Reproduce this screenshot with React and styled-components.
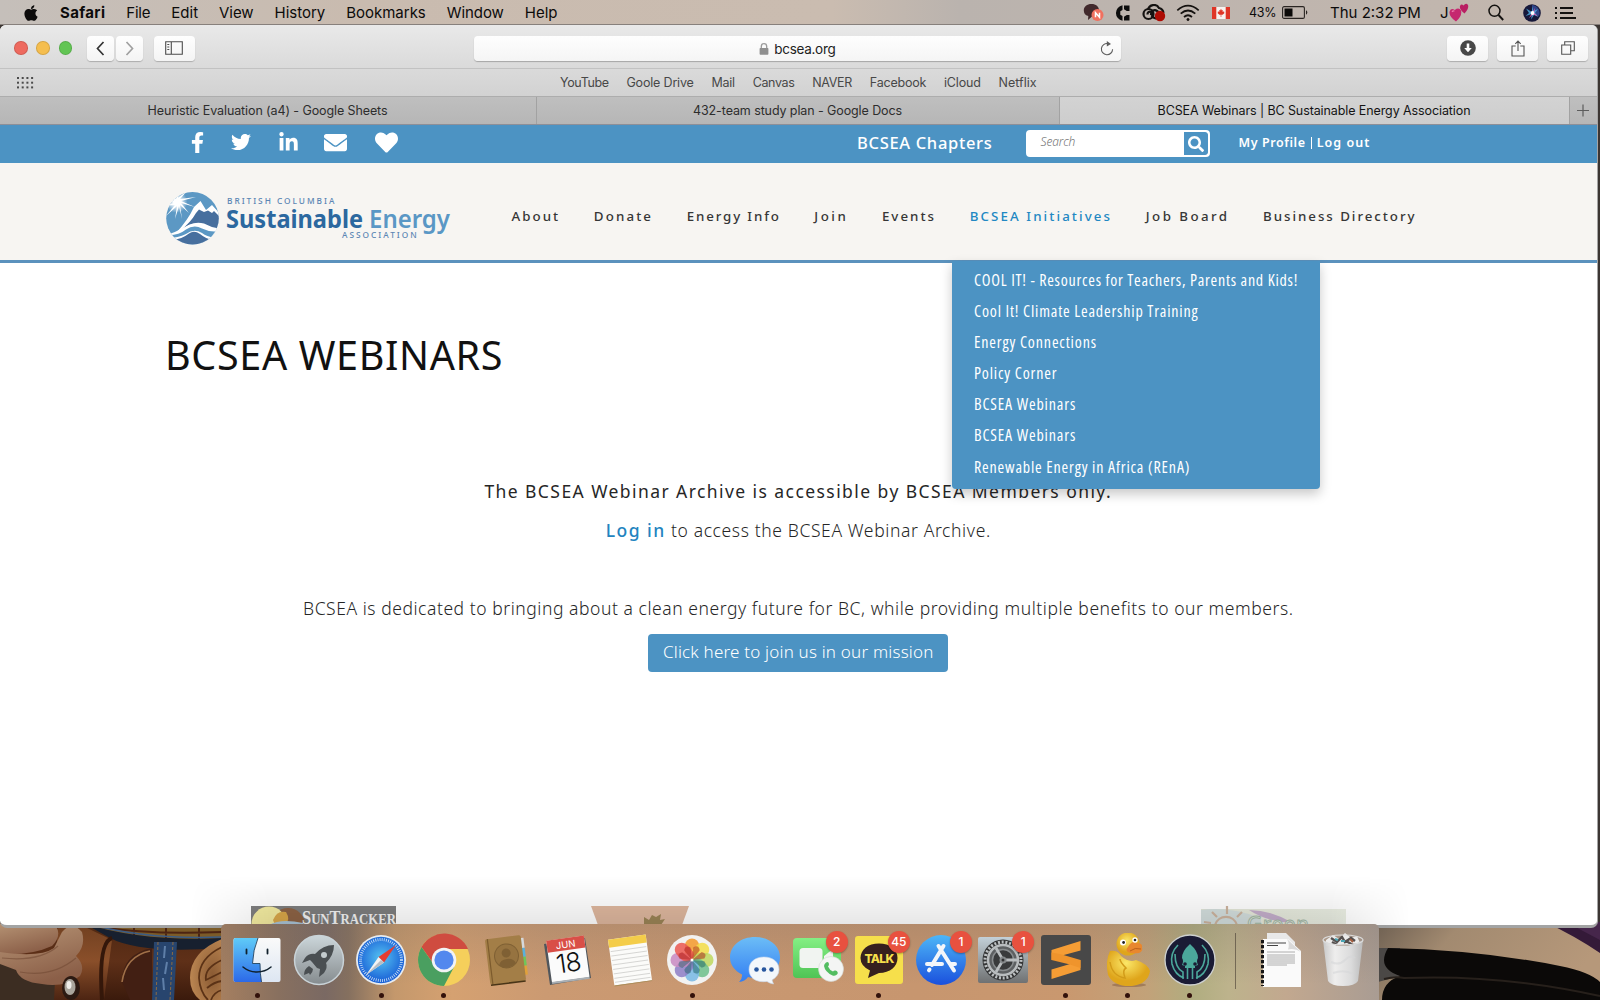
import React from "react";
import styled, { createGlobalStyle } from "styled-components";
import { FaApple, FaFacebookF, FaTwitter, FaLinkedinIn, FaEnvelope, FaHeart, FaSearch } from "react-icons/fa";

const ui = `Inter, "Liberation Sans", sans-serif`;
const web = `"Noto Sans", "Open Sans", sans-serif`;
const narrow = `"Open Sans", "Noto Sans", sans-serif`;
const blue = "#4c93c3";

const Global = createGlobalStyle`
  * { box-sizing: border-box; }
  body { margin: 0; background: #2b1d14; }
  svg { display: block; flex: none; }
`;

/* ---------- desktop ---------- */
const Desktop = styled.div`
  position: relative;
  width: 1600px;
  height: 1000px;
  overflow: hidden;
  display: flex;
  flex-direction: column;
  background: #3c3633;
  font-family: ${ui};
`;
const Wallpaper = styled.svg`
  position: absolute;
  left: 0;
  bottom: 0;
`;

const MenuBar = styled.div`
  position: relative;
  flex: none;
  display: flex;
  align-items: center;
  height: 25px;
  padding: 1px 24px 0 22px;
  background: linear-gradient(90deg, #c5bfba 0, #c9bbaf 22%, #cabcb0 52%, #bab3ae 60%, #bfb5ae 80%, #c3b7ae 100%);
  border-bottom: 1px solid #87807c;
  color: #0c0b0b;
`;
const MenuItem = styled.span`
  font-size: 15px;
  line-height: 24px;
  font-weight: ${(p) => (p.$bold ? 700 : 400)};
  letter-spacing: ${(p) => p.$ls}px;
  margin-left: ${(p) => p.$ml || 20.9}px;
  white-space: nowrap;
`;
const Spacer = styled.div`
  flex: 1;
`;
const Status = styled.div`
  display: flex;
  align-items: center;
  margin-left: ${(p) => p.$ml || 0}px;
  width: ${(p) => p.$w}px;
  font-size: ${(p) => p.$size || 15}px;
  letter-spacing: ${(p) => p.$ls || 0}px;
  white-space: nowrap;
`;

/* ---------- Safari window ---------- */
const Window = styled.div`
  position: relative;
  flex: none;
  width: 1598px;
  height: 903px;
  display: flex;
  flex-direction: column;
  overflow: hidden;
  border-radius: 6px 6px 7px 7px;
  border-right: 1px solid #a5a5a5;
  border-bottom: 3px solid #a3a4a4;
  background: #fff;
`;
const Toolbar = styled.div`
  flex: none;
  display: flex;
  align-items: center;
  height: 44px;
  padding: 3px 9px 0 14px;
  background: linear-gradient(#e9e9e9, #dadada);
  border-bottom: 1px solid #c2c2c2;
`;
const Light = styled.i`
  width: 13.5px;
  height: 13.5px;
  margin-right: 8.8px;
  border-radius: 50%;
  background: ${(p) => p.$c};
  border: 0.5px solid rgba(0, 0, 0, 0.12);
`;
const ToolButton = styled.div`
  display: flex;
  align-items: center;
  justify-content: center;
  width: ${(p) => p.$w}px;
  height: 25px;
  margin-left: ${(p) => p.$ml}px;
  border-radius: 4px;
  background: linear-gradient(#fefefe, #f4f4f4);
  box-shadow: 0 1px 1px rgba(0, 0, 0, 0.22);
`;
const Address = styled.div`
  display: grid;
  grid-template-columns: 1fr auto 1fr;
  align-items: center;
  width: 647px;
  height: 25px;
  margin-left: 279.5px;
  margin-right: auto;
  padding-right: 7px;
  border-radius: 4px;
  background: linear-gradient(#fefefe, #f5f5f5);
  box-shadow: 0 1px 1px rgba(0, 0, 0, 0.25);
`;
const Url = styled.div`
  grid-column: 2;
  display: flex;
  align-items: center;
  gap: 5px;
  padding: 1px 0 0 6px;
  font-size: 13.5px;
  letter-spacing: -0.3px;
  color: #222;
`;
const Reload = styled.div`
  justify-self: end;
`;
const Bookmarks = styled.div`
  flex: none;
  position: relative;
  display: flex;
  align-items: center;
  height: 27px;
  padding-left: 17px;
  background: linear-gradient(#dadada, #d2d2d2);
`;
const BookmarkRow = styled.div`
  display: flex;
  gap: 17.8px;
  margin-left: 526px;
`;
const Bookmark = styled.span`
  font-size: 12.5px;
  letter-spacing: ${(p) => p.$ls}px;
  color: #484848;
  white-space: nowrap;
`;
const TabBar = styled.div`
  flex: none;
  display: flex;
  height: 29px;
  border-top: 1px solid #adadad;
  border-bottom: 1px solid #8d8f98;
  background: linear-gradient(#bfbfbf, #b6b6b6);
`;
const Tab = styled.div`
  display: flex;
  align-items: center;
  justify-content: center;
  width: ${(p) => p.$w}px;
  padding: 0 1px 1px 0;
  border-right: 1px solid #a2a2a2;
  background: ${(p) => (p.$active ? "linear-gradient(#d3d3d3, #cdcdcd)" : "none")};
  color: ${(p) => (p.$active ? "#141414" : "#2d2d2d")};
  font-size: 12.5px;
  letter-spacing: -0.1px;
`;

/* ---------- site ---------- */
const TopBar = styled.div`
  flex: none;
  display: flex;
  align-items: center;
  height: 38px;
  padding: 0 0 2px 190.5px;
  background: ${blue};
  color: #fff;
  font-family: ${web};
`;
const Social = styled.div`
  display: flex;
  align-items: center;
  justify-content: center;
  width: ${(p) => p.$w}px;
  margin-right: ${(p) => p.$mr}px;
  padding-bottom: 2px;
`;
const Chapters = styled.span`
  font-size: 16.5px;
  font-weight: 500;
  letter-spacing: 0.68px;
  margin-left: 458.5px;
  padding-bottom: 1px;
  width: 168.5px;
`;
const SearchBox = styled.div`
  display: flex;
  width: 184px;
  height: 27px;
  margin-top: 1px;
  border: 2px solid #fff;
  border-radius: 4px;
  background: #fff;
  overflow: hidden;
`;
const Placeholder = styled.span`
  flex: 1;
  padding-left: 13px;
  font: italic 300 12px/20px ${web};
  letter-spacing: -0.1px;
  color: #777;
`;
const SearchButton = styled.div`
  display: flex;
  align-items: center;
  justify-content: center;
  width: 24px;
  border-radius: 0 3px 3px 0;
  background: ${blue};
`;
const Account = styled.div`
  display: flex;
  align-items: center;
  margin-left: 29px;
  padding-bottom: 1px;
  font-size: 12.5px;
  font-weight: 600;
`;
const AccountLink = styled.span`
  letter-spacing: ${(p) => p.$ls}px;
`;
const AccountRule = styled.i`
  width: 1px;
  height: 12px;
  margin: 0 5px 0 5px;
  background: #fff;
`;
const Header = styled.header`
  flex: none;
  position: relative;
  display: flex;
  align-items: center;
  height: 100px;
  padding-left: 160px;
  background: #f7f5f2;
  border-bottom: 3px solid #5b92bd;
  z-index: 2;
`;
const LogoSlot = styled.div`
  width: 351.5px;
  padding-top: 12px;
`;
const Nav = styled.nav`
  display: flex;
  gap: 33.6px;
  padding-top: 9px;
`;
const NavItem = styled.span`
  font: 500 13.3px/18px ${web};
  letter-spacing: ${(p) => p.$ls}px;
  color: ${(p) => (p.$active ? "#2288c3" : "#363636")};
  white-space: nowrap;
`;
const Dropdown = styled.div`
  position: absolute;
  left: 952px;
  top: 98px;
  width: 368px;
  height: 228px;
  padding: 4px 0 0 22px;
  border-radius: 0 0 4px 4px;
  background: ${blue};
  box-shadow: 0 5px 12px rgba(0, 0, 0, 0.22);
`;
const DropItem = styled.div`
  height: 31.1px;
  font: 500 16px/31px ${narrow};
  font-stretch: 75%;
  letter-spacing: ${(p) => p.$ls}px;
  color: #fff;
  white-space: nowrap;
`;
const Content = styled.main`
  flex: 1;
  min-height: 0;
  display: flex;
  flex-direction: column;
  align-items: center;
  padding-right: 0.5px;
  font-family: ${web};
`;
const Title = styled.h1`
  align-self: stretch;
  height: 186px;
  margin: 0;
  padding-left: 165px;
  font-size: 39.5px;
  line-height: 185px;
  font-weight: 400;
  letter-spacing: 0.65px;
  color: #111;
`;
const Line = styled.p`
  margin: ${(p) => p.$mt || 0}px 0 0;
  height: 39px;
  font-size: 17.5px;
  line-height: 39px;
  font-weight: ${(p) => (p.$strong ? 400 : 300)};
  letter-spacing: ${(p) => p.$ls}px;
  color: #262626;
  white-space: nowrap;
`;
const LogIn = styled.a`
  font-weight: 500;
  letter-spacing: 1.5px;
  color: #2384bf;
`;
const JoinButton = styled.div`
  display: flex;
  align-items: center;
  justify-content: center;
  width: 300px;
  height: 38px;
  margin-top: 6px;
  padding-bottom: 3px;
  border-radius: 4px;
  background: ${blue};
  color: #fff;
  font-size: 17px;
  font-weight: 300;
  letter-spacing: 0.2px;
`;
const Sponsors = styled.div`
  align-self: stretch;
  flex: none;
  display: flex;
  height: 19px;
  margin-top: auto;
  padding-left: 251px;
  overflow: hidden;
`;
const SponsorSlot = styled.div`
  width: ${(p) => p.$w}px;
  margin-right: ${(p) => p.$mr || 0}px;
`;

/* ---------- dock ---------- */
const DockHaze = styled.div`
  position: absolute;
  left: 190px;
  right: 190px;
  bottom: 72px;
  height: 52px;
  background: linear-gradient(rgba(0, 0, 0, 0), rgba(0, 0, 0, 0.1));
  mask-image: linear-gradient(90deg, transparent, #000 80px, #000 calc(100% - 80px), transparent);
`;
const Dock = styled.div`
  position: absolute;
  left: 221px;
  bottom: 0;
  width: 1158px;
  height: 76px;
  display: flex;
  padding: 9px 0 0 5px;
  border-radius: 5px 5px 0 0;
  background: linear-gradient(rgba(110, 100, 95, 0.22), rgba(110, 100, 95, 0) 80%),
    linear-gradient(90deg, #a57f60 0, #88705f 5%, #7a6963 9%, #85705f 11%, #c4986c 15%, #d5a171 20%, #cb9a72 28%, #c99871 40%, #c7966f 60%, #c9986f 73%, #c2a279 80%, #b0ad80 84%, #bdb38c 87%, #c2a88f 92%, #a99c93 100%);
`;
const DockItem = styled.div`
  position: relative;
  display: flex;
  flex-direction: column;
  align-items: center;
  width: 62.2px;
`;
const Dot = styled.i`
  width: 5px;
  height: 5px;
  margin-top: 5.5px;
  border-radius: 50%;
  background: #32110b;
`;
const Badge = styled.span`
  position: absolute;
  left: 40px;
  top: -2px;
  width: 22px;
  height: 22px;
  border-radius: 50%;
  background: #e8513f;
  box-shadow: 0 1px 2px rgba(0, 0, 0, 0.3);
  color: #fff;
  font: 500 12px/22px ${ui};
  text-align: center;
`;
const DockRule = styled.div`
  width: 29px;
  height: 56px;
  display: flex;
  justify-content: center;
  &::before {
    content: "";
    width: 1px;
    background: rgba(70, 60, 50, 0.6);
  }
`;

/* ---------- drawings ---------- */
const Backdrop = () => (
  <Wallpaper width="1600" height="78" viewBox="0 0 1600 78">
    <defs>
      <linearGradient id="skin" x1="0" y1="0" x2="0.4" y2="1">
        <stop offset="0" stopColor="#b79576" /><stop offset="1" stopColor="#8b5f48" />
      </linearGradient>
      <linearGradient id="leather" x1="0" y1="0" x2="0" y2="1">
        <stop offset="0" stopColor="#4e2812" /><stop offset="0.5" stopColor="#5f3018" /><stop offset="1" stopColor="#3a1a0c" />
      </linearGradient>
      <linearGradient id="flap" x1="0" y1="0" x2="0" y2="1">
        <stop offset="0" stopColor="#6f3f20" /><stop offset="0.5" stopColor="#8a4f2a" /><stop offset="1" stopColor="#4c2412" />
      </linearGradient>
      <radialGradient id="coin" cx="0.7" cy="0.6" r="0.7">
        <stop offset="0" stopColor="#8a5a33" /><stop offset="1" stopColor="#bb8652" />
      </radialGradient>
      <linearGradient id="sand" x1="0" y1="0" x2="1" y2="0.3">
        <stop offset="0" stopColor="#6e6052" /><stop offset="0.35" stopColor="#a28a70" /><stop offset="1" stopColor="#b6987a" />
      </linearGradient>
    </defs>
    <rect width="230" height="78" fill="url(#leather)" />
    <path d="M85 0H222V18Q150 24 85 2Z" fill="#7c5b27" />
    <path d="M100 5Q150 13 222 10M134 0V14M166 0V17M199 0V17" stroke="#4c2412" strokeWidth="2" fill="none" />
    <path d="M85 2Q145 20 222 16V26Q140 32 110 16Z" fill="#17202f" />
    <path d="M85 1Q145 18 222 15" stroke="#3a5c86" strokeWidth="1.5" fill="none" />
    <path d="M0 30L60 48V78H0Z" fill="#3c2d22" />
    <path d="M58 0L85 5L112 18L104 78H54Z" fill="url(#flap)" />
    <path d="M112 16Q98 20 102 78" stroke="#34170a" strokeWidth="4" fill="none" />
    <path d="M122 60Q122 32 152 26V78H130Z" fill="#421f13" />
    <path d="M122 60Q126 34 150 29" stroke="#a07048" strokeWidth="1.6" fill="none" />
    <path d="M154 20H177L174 78H152Z" fill="#28456e" />
    <path d="M158 20L156 78M173 20L170 78" stroke="#8d6b43" strokeWidth="1" strokeDasharray="3 2" />
    <path d="M165 24l-1 12M167 40l-2 12M163 56l1 12" stroke="#5f7fa8" strokeWidth="2" />
    <path d="M222 17Q190 30 190 56Q190 70 200 78H222Z" fill="url(#coin)" />
    <path d="M222 25Q199 36 199 56Q200 70 208 78M222 38Q204 46 206 58L222 50M207 66Q214 60 222 59M211 78Q214 70 222 68" stroke="#5b3216" strokeWidth="1.8" fill="none" />
    <path d="M0 2Q36-4 56 4Q62 14 52 24Q30 34 0 32Z" fill="url(#skin)" />
    <path d="M62 10Q72 -2 82 10Q86 24 76 34Q86 44 80 54Q64 66 42 62Q20 60 16 48L0 42V30Q40 36 54 26Z" fill="url(#skin)" />
    <path d="M2 36Q40 40 58 24M20 50Q52 56 76 36" stroke="#724933" strokeWidth="1.2" fill="none" opacity="0.6" />
    <ellipse cx="71" cy="66" rx="9" ry="12" fill="#2c1a12" />
    <ellipse cx="70" cy="65" rx="5.5" ry="8" fill="#a9a59c" />
    <ellipse cx="69" cy="63" rx="2.5" ry="4" fill="#efeeea" />
    <path d="M1378 0H1600V78H1378Z" fill="url(#sand)" />
    <path d="M1378 26H1400V54L1378 60Z" fill="#4b4846" />
    <path d="M1388 26Q1480 28 1560 44Q1590 50 1600 60V78H1382Q1382 60 1400 54Q1376 46 1388 26Z" fill="#0b0908" />
    <path d="M1384 57Q1396 54 1404 56Q1500 52 1600 74" stroke="#27201b" strokeWidth="2" fill="none" />
    <path d="M1545 0H1600V31Q1575 14 1545 0Z" fill="#341a38" />
    <path d="M1566 0H1600V18Z" fill="#46264b" />
  </Wallpaper>
);

const TalkIcon = () => (
  <svg width="21" height="19" viewBox="0 0 21 19">
    <path d="M8.5 1C13 1 16 3.6 16 7.4S13 13.6 9 13.6L5 17l.3-4C2 12 .8 10 .8 7.4.8 3.6 4 1 8.5 1Z" fill="#41292c" />
    <circle cx="14.5" cy="12" r="6" fill="#f0705f" />
    <path d="M12.5 14.3V9.7l4 4.6V9.7" stroke="#fff" strokeWidth="1.5" fill="none" />
  </svg>
);
const CIcon = () => (
  <svg width="16" height="16" viewBox="0 0 16 16">
    <path d="M8.5 .3V5L6.3 6.2V9.8L8.5 11V15.7A7.8 7.8 0 0 1 8.5 .3Z" fill="#0d0d0d" />
    <path d="M10 .5H15.5V6H12.8L10 4.3ZM10 15.5H15.5V10H12.8L10 11.7Z" fill="#0d0d0d" />
  </svg>
);
const CloudIcon = () => (
  <svg width="25" height="18" viewBox="0 0 25 18">
    <g fill="none" stroke="#141211" strokeWidth="2.2">
      <circle cx="6.5" cy="10" r="5" />
      <path d="M6 5.5A6 6 0 0 1 17 4Q21 5 21.5 9M5.5 10.5a2.6 2.6 0 1 1 4.5 1.5q3 4 6 1" />
      <path d="M9 11Q9 6 13 6.2q3 .3 3.5 3" />
    </g>
    <circle cx="18" cy="12" r="5.2" fill="#ad0c04" />
  </svg>
);
const WifiIcon = () => (
  <svg width="24" height="18" viewBox="0 0 24 18" fill="none" stroke="#14110f" strokeWidth="1.7">
    <path d="M1.3 6.3Q12-3 22.7 6.3M4.7 9.7Q12 3.3 19.3 9.7M8 13Q12 9.5 16 13" />
    <circle cx="12" cy="15.5" r="1.2" fill="#14110f" strokeWidth="0.5" />
  </svg>
);
const FlagIcon = () => (
  <svg width="18" height="12" viewBox="0 0 18 12">
    <rect width="18" height="12" fill="#f7f2ef" />
    <path d="M0 0h4.3v12H0zM13.7 0H18v12h-4.3z" fill="#df3526" />
    <path d="M9 1.8l.9 1.6 1-.4-.3 2 1.6-.8-.3 1.2.9.4-2.2 2H9.3V10h-.6V7.8H7.4l-2.2-2 .9-.4-.3-1.2 1.6.8-.3-2 1 .4Z" fill="#df3526" />
  </svg>
);
const BatteryIcon = () => (
  <svg width="26" height="13" viewBox="0 0 26 13">
    <rect x=".6" y=".6" width="21.8" height="11.8" rx="1.5" fill="none" stroke="#2a2522" strokeWidth="1.1" />
    <rect x="2.5" y="2.5" width="8" height="8" fill="#0c0a09" />
    <path d="M24 4.3q1.3.6 1.3 2.2t-1.3 2.2Z" fill="#2a2522" />
  </svg>
);
const HeartsIcon = () => (
  <svg width="20" height="20" viewBox="0 0 20 20">
    <path d="M7 18.5Q-.5 13 .6 8.5 2 4.5 5.8 7 9.8 3.8 12 7.5 13.5 12.5 7 18.5Z" fill="#c5276f" />
    <path d="M3 8.8q1-1.3 2.4-.5" stroke="#ef7cae" strokeWidth="1.2" fill="none" />
    <path d="M15.5 10.5Q10 6 11 3 12.3 .4 14.5 2.5 17-.6 19 2 20.2 5.5 15.5 10.5Z" fill="#b91f63" />
  </svg>
);
const LensIcon = () => (
  <svg width="16" height="17" viewBox="0 0 16 17" fill="none" stroke="#141210" strokeWidth="1.5">
    <circle cx="6.5" cy="6.8" r="5.5" />
    <path d="M10.5 11l4.7 5" strokeWidth="1.9" />
  </svg>
);
const SiriIcon = () => (
  <svg width="18" height="18" viewBox="0 0 18 18">
    <circle cx="9" cy="9" r="8.8" fill="#16183a" />
    <path d="M9 1A8 8 0 0 1 16 12L9 9Z" fill="#3b55a8" opacity=".7" />
    <path d="M9 8L3 4.5 6 9 2.5 12 9 10 8 15.5 11 11 15.5 13 12 9 15 5 10.5 7 9 2.5Z" fill="#4da8dc" opacity=".85" />
    <path d="M9 9L12 4 11 9 15 12 10 10.5 6 14Z" fill="#d55eb0" />
    <circle cx="9.5" cy="9" r="1.9" fill="#fff" />
  </svg>
);
const ListIcon = () => (
  <svg width="21" height="14" viewBox="0 0 21 14" stroke="#141210" strokeWidth="1.9">
    <path d="M0 2h2M0 7h2M0 12h2M5 2h13M5 7h13M5 12h16" />
  </svg>
);
const Chevron = ({ flip, c }) => (
  <svg width="9" height="15" viewBox="0 0 9 15" fill="none" stroke={c} strokeWidth="1.7">
    <path d={flip ? "M1.5 1l6 6.5-6 6.5" : "M7.5 1l-6 6.5 6 6.5"} />
  </svg>
);
const SidebarIcon = () => (
  <svg width="18" height="14" viewBox="0 0 18 14" fill="none" stroke="#4c4c4c" strokeWidth="1.1">
    <path d="M.7 .7h16.6v12.6H.7zM6.3 .7v12.6M2.3 3.5h2M2.3 6h2M2.3 8.5h2" />
  </svg>
);
const LockIcon = () => (
  <svg width="10" height="12" viewBox="0 0 10 12">
    <path d="M2.3 5.5V3.4a2.7 2.7 0 0 1 5.4 0v2.1" fill="none" stroke="#9b9b9b" strokeWidth="1.3" />
    <rect x=".6" y="5" width="8.8" height="6.8" rx=".8" fill="#8f8f8f" />
  </svg>
);
const ReloadIcon = () => (
  <svg width="14" height="15" viewBox="0 0 14 15">
    <path d="M8 2.6A5.6 5.6 0 1 0 12.6 8.2" fill="none" stroke="#5d5d5d" strokeWidth="1.1" />
    <path d="M6.8 0L11 3 6.8 5.4Z" fill="#5d5d5d" />
  </svg>
);
const DownloadIcon = () => (
  <svg width="16" height="16" viewBox="0 0 16 16">
    <circle cx="8" cy="8" r="7.8" fill="#484848" />
    <path d="M6.7 3.5h2.6V8h2.5L8 12.3 4.2 8h2.5Z" fill="#fff" />
  </svg>
);
const ShareIcon = () => (
  <svg width="14" height="17" viewBox="0 0 14 17" fill="none" stroke="#555" strokeWidth="1.1">
    <path d="M4.7 6H1v10h12V6H9.3M7 11V1M4.3 3.8L7 1l2.7 2.8" />
  </svg>
);
const TabsIcon = () => (
  <svg width="14" height="14" viewBox="0 0 14 14" fill="none" stroke="#555" strokeWidth="1.1">
    <path d="M.7 4h9v9.3h-9zM3.7 4V.7h9.6v9H9.7" />
  </svg>
);
const GridDots = () => (
  <svg width="17" height="12" viewBox="0 0 17 12" fill="#4b4b4b">
    {[0, 1, 2, 3].map((x) => [0, 1, 2].map((y) => <rect key={`${x}${y}`} x={x * 4.7} y={y * 4.7} width="2" height="2" />))}
  </svg>
);
const PlusIcon = () => (
  <svg width="27" height="27" viewBox="0 0 27 27" stroke="#5c5c5c" strokeWidth="1.2">
    <path d="M7 13.5h12M13 7.5v12" />
  </svg>
);

const SiteLogo = () => (
  <svg width="300" height="60" viewBox="160 188 300 60">
    <defs>
      <clipPath id="disc"><circle cx="192.5" cy="218.3" r="26.3" /></clipPath>
      <radialGradient id="sun"><stop offset="0.25" stopColor="#fff" /><stop offset="1" stopColor="#fff" stopOpacity="0" /></radialGradient>
    </defs>
    <g clipPath="url(#disc)">
      <rect x="166" y="191" width="54" height="54" fill="#5c98c4" />
      <circle cx="176.5" cy="202" r="11" fill="url(#sun)" />
      <path
        d="M176 201L170 190 174 201 162 195 174 203 163 206 175 205 166 216 177 206 175 219 179 206 182 219 180 205 189 213 181 203 195 207 181 201 196 197 180 199 188 190 178 198 179 190Z"
        fill="#fff"
      />
      <path d="M176 233Q188 220 194 207L200.5 201 206 210 212 205 222 216V240Z" fill="#fff" />
      <path d="M180 231Q191 222 196 213L199 209.5 204 212 208 210.5 212 213 214 211 222 219V229Q212 228 204 223.5 192 220 180 231Z" fill="#476f9e" />
      <path d="M164 236Q176 232 184 227.5 194 221 204 226 212 230 222 229V245H164Z" fill="#fff" />
      <path d="M166 235Q178 236 186 229.5 194 224 202 228.5 210 232.5 219 231L217 237Q208 238 202 233 194 228 186 234 178 238 168 238Z" fill="#5c98c4" />
      <path d="M172 240Q182 239 189 233.5 194 230 200 234 206 239 213 240L205 246H180Z" fill="#476f9e" />
    </g>
    <g fontFamily={web}>
      <text x="227" y="203.8" fontSize="8.3" fontWeight="500" letterSpacing="1.98" fill="#5b86b4">BRITISH COLUMBIA</text>
      <text x="226" y="227.5" fontSize="25.5" fontWeight="700" textLength="137" lengthAdjust="spacingAndGlyphs" fill="#2c689f">Sustainable</text>
      <text x="369" y="227.5" fontSize="25.5" fontWeight="600" textLength="81" lengthAdjust="spacingAndGlyphs" fill="#5a97c5">Energy</text>
      <text x="342" y="237.5" fontSize="8.3" fontWeight="500" letterSpacing="2" fill="#5b86b4">ASSOCIATION</text>
    </g>
  </svg>
);

const SunTracker = () => (
  <svg width="145" height="19" viewBox="0 0 145 19">
    <rect width="145" height="19" fill="#7e7e7e" />
    <circle cx="37" cy="19" r="17" fill="#8d6345" />
    <circle cx="18" cy="18" r="17.5" fill="#f3eba0" />
    <path d="M22 14Q26 4 35 6 40 14 34 19H24Z" fill="#d9a749" />
    <path d="M18 19Q30 12 52 17V19Z" fill="#a9c3d5" />
    <text x="51" y="18" fontFamily={`"Liberation Serif", serif`} fontWeight="700" fill="#f3f3f3" fontSize="14" textLength="94" lengthAdjust="spacingAndGlyphs">
      <tspan fontSize="18">S</tspan>UN<tspan fontSize="18">T</tspan>RACKER
    </text>
  </svg>
);
const Trapezoid = () => (
  <svg width="98" height="19" viewBox="0 0 98 19">
    <path d="M0 0H98L91 19H7Z" fill="#deb79e" />
    <path d="M53 19V11l5 3 3-5 4 2 5-3-1 6 5-1-4 6Z" fill="#9b8456" />
  </svg>
);
const GreenLogo = () => (
  <svg width="145" height="19" viewBox="0 0 145 19">
    <defs>
      <linearGradient id="fade" x1="0" y1="0" x2="1" y2="0"><stop offset="0" stopColor="#e3e6d6" /><stop offset="1" stopColor="#eaeee3" /></linearGradient>
    </defs>
    <rect y="3" width="145" height="16" fill="url(#fade)" />
    <path d="M0 4Q28 0 60 12V19H0Z" fill="#d3dedd" />
    <path d="M48 4Q70 4 92 17 66 16 48 4Z" fill="#c4aecb" />
    <path d="M14 19A11.5 11.5 0 0 1 36 19M26 0v8M11 6l5 5M41 6l-5 5M3 16l7 1" fill="none" stroke="#cdb49f" strokeWidth="2.2" />
    <text x="46" y="26" fontFamily={web} fontSize="21" fill="#e3ebe0" stroke="#a3b8a5" strokeWidth=".9" textLength="62">Green</text>
  </svg>
);

const Icon = ({ children }) => (
  <svg width="54" height="54" viewBox="-27 -27 54 54">{children}</svg>
);
const petals = ["#f39a2e", "#f2dc4a", "#bfd860", "#6fc08c", "#79b9e3", "#8f7fc6", "#c98bc2", "#ea5b53"];

const Finder = () => (
  <Icon>
    <defs>
      <linearGradient id="fa" x1="0" y1="0" x2="0" y2="1"><stop offset="0" stopColor="#5fcbf8" /><stop offset="1" stopColor="#2c69e8" /></linearGradient>
      <linearGradient id="fb" x1="0" y1="0" x2="0" y2="1"><stop offset="0" stopColor="#fafafa" /><stop offset="1" stopColor="#dde6f2" /></linearGradient>
    </defs>
    <rect x="-23.5" y="-22" width="47" height="44" rx="2" fill="url(#fb)" />
    <path d="M-21.5-22H1Q-4-10-4.5 3.5H3Q3 14 4.5 22H-21.5a2 2 0 0 1-2-2V-20a2 2 0 0 1 2-2Z" fill="url(#fa)" />
    <path d="M1-22Q-4-10-4.5 3.5H3Q3 14 4.5 22" fill="none" stroke="#24435f" strokeWidth=".9" />
    <path d="M-10.5-10.5v4M10.5-10.5v4" stroke="#10202c" strokeWidth="1.8" strokeLinecap="round" />
    <path d="M-14 7Q-8 12 0 12T14 7" fill="none" stroke="#10202c" strokeWidth="1.5" strokeLinecap="round" />
  </Icon>
);
const Launchpad = () => (
  <Icon>
    <defs><linearGradient id="lp" x1="0" y1="0" x2="0" y2="1"><stop offset="0" stopColor="#ccd6da" /><stop offset="1" stopColor="#858b8e" /></linearGradient></defs>
    <circle r="24.5" fill="url(#lp)" stroke="#c9d3d8" strokeWidth="1.5" />
    <path d="M15-15Q4-15-4-6Q-10-7-14-2L-17 3-9 0-7 2-2 8 1 9 0 17 5 13Q9 7 7 3 15-5 15-15Z" fill="#4a4f52" />
    <circle cx="5" cy="-5" r="3" fill="#c3cbce" />
    <path d="M-10 6Q-15 9-15 15L-10 13-9 15Q-6 12-6 9Z" fill="#4a4f52" />
  </Icon>
);
const SafariIcon = () => (
  <Icon>
    <defs><radialGradient id="sf" cy="0.45"><stop offset="0" stopColor="#55c3f1" /><stop offset="1" stopColor="#1c64d8" /></radialGradient></defs>
    <circle r="25" fill="#e8ecf0" />
    <circle r="23.2" fill="url(#sf)" />
    <circle r="20.5" fill="none" stroke="#e3f1fb" strokeWidth="3" strokeDasharray=".8 1.35" opacity=".9" />
    <path d="M15-15L3 2.5-2.5-3Z" fill="#e53c32" />
    <path d="M-15 15L3 2.5-2.5-3Z" fill="#f3f3f3" />
    <path d="M-15 15L3 2.5 0 0Z" fill="#b9bec4" />
  </Icon>
);
const Chrome = () => (
  <Icon>
    <circle r="26" fill="#f5cf5b" />
    <path d="M-22.5-13A26 26 0 0 1 24-11H0L-9 6Z" fill="#cf4c40" />
    <path d="M-22.5-13A26 26 0 0 0 0 26L10 7-9 6-22.5-13Z" fill="#4a9f60" />
    <circle r="12.3" fill="#f2f3f5" />
    <circle r="9.6" fill="#5388ee" />
  </Icon>
);
const Contacts = () => (
  <Icon>
    <g transform="rotate(-7)">
      <path d="M15-20h5v10h-5z" fill="#d6d9dc" /><path d="M15-10h5v9h-5z" fill="#59b1dc" /><path d="M15-1h5v9h-5z" fill="#6fc659" /><path d="M15 8h5v9h-5z" fill="#e0a13a" />
      <rect x="-18.5" y="-23" width="36" height="46" rx="2" fill="#a37e47" />
      <path d="M-16-23v46" stroke="#7c5b2d" strokeWidth="1.2" />
      <path d="M-18 23.2H17" stroke="#493517" strokeWidth="1.5" />
      <circle cx="1" cy="-4" r="12" fill="#967340" stroke="#7f6034" strokeWidth="1" />
      <circle cx="1" cy="-7" r="4.5" fill="#7f6034" /><path d="M-7.5 4.5Q-6-1 1-1t8.5 5.5Q1 11-7.5 4.5Z" fill="#7f6034" />
    </g>
  </Icon>
);
const Calendar = () => (
  <Icon>
    <path d="M-24-16L17-22 23 18-18 25Z" fill="#50565c" />
    <g transform="rotate(-8)">
      <rect x="-19" y="-22" width="38" height="42" rx="1" fill="#fbfbfb" />
      <path d="M-19-22h38v12h-38z" fill="#d94f47" />
      <text x="-.2" y="-12.3" fontFamily={ui} fontSize="9.5" fill="#fff" textAnchor="middle">JUN</text>
      <text x="-.2" y="12" fontFamily={ui} fontSize="26" fontWeight="300" letterSpacing="-1" fill="#111" textAnchor="middle">18</text>
      <path d="M-19 20.5h38" stroke="#a9afb4" strokeWidth="2" />
    </g>
  </Icon>
);
const Notes = () => (
  <Icon>
    <g transform="rotate(-8)">
      <rect x="-19" y="-23" width="38" height="46" fill="#fbfbf9" />
      <path d="M-19-23h38v8h-38z" fill="#f4cd4a" />
      {[-11, -6.5, -2, 2.5, 7, 11.5, 16, 20].map((y) => <path key={y} d={`M-18 ${y}h36`} stroke="#cfcfcc" strokeWidth=".8" />)}
      <path d="M-19 23.5h38" stroke="#a98c58" strokeWidth="1" />
    </g>
  </Icon>
);
const Photos = () => (
  <Icon>
    <circle r="25" fill="#f2f2f1" />
    {petals.map((c, i) => <rect key={c} x="-7" y="-21.5" width="14" height="21" rx="7" fill={c} opacity=".87" transform={`rotate(${i * 45})`} />)}
    {petals.map((c, i) => <path key={c} d="M0 0L-3.5-12Q0-17 3.5-12Z" fill={i > 1 && i < 6 ? "#26666b" : "#a92020"} opacity=".5" transform={`rotate(${i * 45 + 22})`} />)}
    <circle r="1.5" fill="#fff" />
  </Icon>
);
const Messages = () => (
  <Icon>
    <defs><linearGradient id="ms" x1="0" y1="0" x2="0" y2="1"><stop offset="0" stopColor="#6cbdf6" /><stop offset="1" stopColor="#327df3" /></linearGradient></defs>
    <path d="M0-23C14-23 25-14.5 25-2.5S14 18 0 18Q-4 18-7 17-10 21.5-16 22-12.5 19-13 14.5C-20 11-25 5-25-2.5-25-14.5-14-23 0-23Z" fill="url(#ms)" />
    <path d="M9-3C18-3 24 2 24 9.5Q24 16 17 20L18.5 24Q14 23 12 21.5C0 23-6 17-6 9.5C-6 2 0-3 9-3Z" fill="#f3f7fb" stroke="#c8d9ec" strokeWidth=".6" />
    <g fill="#28579f"><circle cx="1.5" cy="9.5" r="2.3" /><circle cx="9" cy="9.5" r="2.3" /><circle cx="16.5" cy="9.5" r="2.3" /></g>
  </Icon>
);
const FaceTime = () => (
  <Icon>
    <defs><linearGradient id="ft" x1="0" y1="0" x2="0" y2="1"><stop offset="0" stopColor="#84ef84" /><stop offset="1" stopColor="#4fc455" /></linearGradient></defs>
    <rect x="-24" y="-22" width="48" height="40" rx="4" fill="url(#ft)" />
    <rect x="-17.5" y="-12" width="23" height="20" rx="3.5" fill="#f1f4f1" />
    <path d="M7-4L16-11V7L7 1Z" fill="#f1f4f1" />
    <circle cx="14" cy="9" r="12.5" fill="#f4f5f4" stroke="#d3d6d3" strokeWidth=".6" />
    <path d="M9 2.5q2.5-1.5 3 1.5 0 1.5-1 2.5 1.5 3.5 5 5 1-1.3 2.5-1 3 1 2 3.5-2 2.5-5 1.5Q8 12 7 6 7 4 9 2.5Z" fill="#53bd61" />
  </Icon>
);
const Talk = () => (
  <Icon>
    <rect x="-24" y="-24" width="48" height="48" rx="3" fill="#f6df4b" />
    <path d="M0-16.5C11-16.5 18.5-10.5 18.5-2S11 13 0 13L-11 18-9 10.5Q-18.5 6-18.5-2C-18.5-10.5-11-16.5 0-16.5Z" fill="#36201e" />
    <text y="3" fontFamily={ui} fontSize="12" fontWeight="800" letterSpacing="-.7" fill="#f6df4b" textAnchor="middle">TALK</text>
  </Icon>
);
const AppStore = () => (
  <Icon>
    <defs><linearGradient id="as" x1="0" y1="0" x2="0" y2="1"><stop offset="0" stopColor="#4db6f7" /><stop offset="1" stopColor="#1a50dd" /></linearGradient></defs>
    <circle r="25" fill="url(#as)" />
    <g stroke="#f3f6fa" strokeWidth="4" strokeLinecap="round">
      <path d="M2.5-14L-9 5M-2.5-14L13 10.5M-14 4H1M9 4h5M-11.5 9.5l-.5.8" />
    </g>
  </Icon>
);
const Settings = () => (
  <Icon>
    <defs><linearGradient id="st" x1="0" y1="0" x2="0" y2="1"><stop offset="0" stopColor="#c3d0d8" /><stop offset="1" stopColor="#6f7172" /></linearGradient></defs>
    <rect x="-25" y="-23" width="50" height="46" rx="2" fill="url(#st)" />
    <circle r="20.5" fill="#343536" />
    <circle r="18" fill="none" stroke="#bcc0c2" strokeWidth="3" strokeDasharray="2 1.77" />
    <circle r="15" fill="#5d6062" stroke="#b9bdbf" strokeWidth="2.5" />
    <circle r="10.5" fill="#393b3c" stroke="#888c8e" strokeWidth="1.5" />
    <path d="M0 0H14M0 0L-7-12M0 0L-7 12" stroke="#b9bdbf" strokeWidth="2.8" />
    <circle r="3.5" fill="#85898b" /><circle r="1.5" fill="#303132" />
  </Icon>
);
const Sublime = () => (
  <Icon>
    <rect x="-25" y="-25" width="50" height="50" rx="3" fill="#484848" />
    <path d="M14.5-19V-9.5L-4-4.5-14.5 0V-10Z" fill="#f59d35" />
    <path d="M14.5 0V10L-14.5 19V9.5L4 4Z" fill="#f59d35" />
    <path d="M-14.5-7.5V0L4 4.5 14.5 8V0L-6-6Z" fill="#ef942c" />
  </Icon>
);
const Duck = () => (
  <Icon>
    <defs><radialGradient id="dk" cx="0.45" cy="0.35"><stop offset="0" stopColor="#fbe768" /><stop offset="1" stopColor="#dfa51b" /></radialGradient></defs>
    <ellipse cx="1" cy="25" rx="17" ry="2" fill="#80583b" opacity=".5" />
    <path d="M-18-9Q-10-10-7-4 1 3 8 0 20 4 22 11 20 24 4 26-14 27-20 15-23 1-18-9Z" fill="url(#dk)" />
    <circle cx="0" cy="-16" r="11.5" fill="url(#dk)" />
    <path d="M0-13Q4-20 9-17 15-17 14-12 15-9 11-7 3-6 0-8-3-10 0-13Z" fill="#e8872e" />
    <path d="M2-9Q7-13 13-11" fill="none" stroke="#b9601c" strokeWidth="1" />
    <circle cx="-5" cy="-17.5" r="3" fill="#fff" /><circle cx="7" cy="-20" r="2.7" fill="#fff" />
    <circle cx="-4.4" cy="-17.5" r="1.4" fill="#222" /><circle cx="7" cy="-20" r="1.3" fill="#222" />
    <path d="M-18 2Q-16 16-3 18-6 10-2 8-8 2-8-1" fill="none" stroke="#d29b19" strokeWidth="1.5" />
  </Icon>
);
const Kraken = () => (
  <Icon>
    <circle r="25" fill="#1a1b34" stroke="#cdd0cf" strokeWidth="1.3" />
    <path d="M0-16Q8-9 8-2 6 1 8 5L5 6V8H-5V6L-8 5Q-6 1-8-2-8-9 0-16Z" fill="#4ba79b" />
    <g fill="none" stroke="#4ba79b" strokeWidth="1.6">
      <path d="M-12-15Q-20-7-18 4-15 15-6 18M12-15Q20-7 18 4 15 15 6 18M-15-6Q-15 8-7 12V19M15-6Q15 8 7 12V19M-2.5 7V19M2.5 7V19" />
    </g>
    <circle cx="-5" cy="4" r="1.8" fill="#1a1b34" /><circle cx="5" cy="4" r="1.8" fill="#1a1b34" />
  </Icon>
);
const Documents = () => (
  <Icon>
    <path d="M-14-27H5L14-18V20H-14Z" fill="#e8e8e8" />
    <path d="M-18-21H7L20-9V27H-18Z" fill="#fafafa" />
    <path d="M6-21L20-8Q14-12 7-10.5Q9-16 6-21Z" fill="#d9d9d9" />
    <path d="M-18.5-20V26" stroke="#161616" strokeWidth="3" strokeDasharray="3.2 1.8" />
    <path d="M-14-17H5M-14-14.5H-3" stroke="#444" strokeWidth="1.2" />
    {[-8, -5, -3, -1, 1, 3, 5].map((y) => <path key={y} d={`M-14 ${y}h${y === 5 ? 20 : 28}`} stroke="#999" strokeWidth=".8" />)}
  </Icon>
);
const Trash = () => (
  <Icon>
    <defs><linearGradient id="tr"><stop offset="0" stopColor="#c9cacb" /><stop offset="0.3" stopColor="#f1f1f1" /><stop offset="0.7" stopColor="#dddedf" /><stop offset="1" stopColor="#bbbcbd" /></linearGradient></defs>
    <path d="M-17-20L-10-25-4-21 2-27 8-22 14-24 17-17-17-14Z" fill="#ecebea" />
    <path d="M-12-22l6 4 5-5 3 5 6-4 4 3M-11-18l5 3M3-19l7 4" stroke="#55504f" strokeWidth="2.4" fill="none" />
    <path d="M-2-19l4 0M-8-21l3 1" stroke="#4ba5b3" strokeWidth="2" />
    <path d="M7-21l3 3" stroke="#a35b3c" strokeWidth="2" />
    <path d="M-20-20Q0-8 20-20L15 21Q12 26 0 26T-15 21Z" fill="url(#tr)" opacity=".96" />
    <ellipse cy="-20" rx="20" ry="5" fill="none" stroke="#dcdcdc" strokeWidth="1.2" />
    <path d="M-12 2Q-4 6 2 0T12-2M-10 13Q2 9 10 14" stroke="#d6d7d8" strokeWidth="2" fill="none" opacity=".6" />
  </Icon>
);

/* ---------- data ---------- */
const menus = [["File", -0.2], ["Edit", 0.05], ["View", -0.05], ["History", 0], ["Bookmarks", 0], ["Window", -0.05], ["Help", 0]];
const bookmarks = [["YouTube", -0.38], ["Goole Drive", -0.17], ["Mail", -0.25], ["Canvas", -0.37], ["NAVER", -0.3], ["Facebook", -0.22], ["iCloud", -0.15], ["Netflix", 0]];
const nav = [["About", 2.05], ["Donate", 2.12], ["Energy Info", 1.87], ["Join", 2.5], ["Events", 2.05], ["BCSEA Initiatives", 2.1, true], ["Job Board", 2.45], ["Business Directory", 1.96]];
const initiatives = [
  ["COOL IT! - Resources for Teachers, Parents and Kids!", 0.75], ["Cool It! Climate Leadership Training", 0.82], ["Energy Connections", 0.85],
  ["Policy Corner", 0.83], ["BCSEA Webinars", 0.85], ["BCSEA Webinars", 0.85], ["Renewable Energy in Africa (REnA)", 0.83],
];
const dock = [
  [Finder, true], [Launchpad], [SafariIcon, true], [Chrome, true], [Contacts], [Calendar], [Notes], [Photos, true], [Messages],
  [FaceTime, false, "2"], [Talk, true, "45"], [AppStore, false, "1"], [Settings, false, "1"], [Sublime, true], [Duck, true], [Kraken, true],
];

export default function App() {
  return (
    <Desktop>
      <Global />
      <Backdrop />
      <MenuBar>
        <FaApple size={18} />
        <MenuItem $bold $ls={0.36} $ml={20}>Safari</MenuItem>
        {menus.map(([t, ls]) => <MenuItem key={t} $ls={ls}>{t}</MenuItem>)}
        <Spacer />
        <Status $w={21}><TalkIcon /></Status>
        <Status $w={16} $ml={10}><CIcon /></Status>
        <Status $w={25} $ml={12}><CloudIcon /></Status>
        <Status $w={24} $ml={9}><WifiIcon /></Status>
        <Status $w={18} $ml={12}><FlagIcon /></Status>
        <Status $w={28} $ml={19} $size={12.5} $ls={-0.3}>43%</Status>
        <Status $w={26} $ml={5}><BatteryIcon /></Status>
        <Status $w={91} $ml={22}>Thu 2:32 PM</Status>
        <Status $w={28} $ml={19}>J<HeartsIcon /></Status>
        <Status $w={16} $ml={20}><LensIcon /></Status>
        <Status $w={18} $ml={19}><SiriIcon /></Status>
        <Status $w={21} $ml={14}><ListIcon /></Status>
      </MenuBar>
      <Window>
        <Toolbar>
          <Light $c="#ee6a5f" />
          <Light $c="#f5be4f" />
          <Light $c="#62c554" />
          <ToolButton $w={27} $ml={6}><Chevron c="#333" /></ToolButton>
          <ToolButton $w={27} $ml={2}><Chevron flip c="#a0a0a0" /></ToolButton>
          <ToolButton $w={41} $ml={11}><SidebarIcon /></ToolButton>
          <Address>
            <Url><LockIcon />bcsea.org</Url>
            <Reload><ReloadIcon /></Reload>
          </Address>
          <ToolButton $w={41} $ml={0}><DownloadIcon /></ToolButton>
          <ToolButton $w={41} $ml={9}><ShareIcon /></ToolButton>
          <ToolButton $w={41} $ml={9}><TabsIcon /></ToolButton>
        </Toolbar>
        <Bookmarks>
          <GridDots />
          <BookmarkRow>
            {bookmarks.map(([t, ls]) => <Bookmark key={t} $ls={ls}>{t}</Bookmark>)}
          </BookmarkRow>
        </Bookmarks>
        <TabBar>
          <Tab $w={537}>Heuristic Evaluation (a4) - Google Sheets</Tab>
          <Tab $w={523}>432-team study plan - Google Docs</Tab>
          <Tab $w={510} $active>BCSEA Webinars | BC Sustainable Energy Association</Tab>
          <PlusIcon />
        </TabBar>
        <TopBar>
          <Social $w={14} $mr={26}><FaFacebookF size={21} /></Social>
          <Social $w={21} $mr={26}><FaTwitter size={20} /></Social>
          <Social $w={22} $mr={24}><FaLinkedinIn size={21} /></Social>
          <Social $w={24} $mr={27}><FaEnvelope size={23} /></Social>
          <Social $w={24} $mr={0}><FaHeart size={23} /></Social>
          <Chapters>BCSEA Chapters</Chapters>
          <SearchBox>
            <Placeholder>Search</Placeholder>
            <SearchButton><FaSearch size={16} color="#fff" /></SearchButton>
          </SearchBox>
          <Account>
            <AccountLink $ls={0.58}>My Profile</AccountLink>
            <AccountRule />
            <AccountLink $ls={1.05}>Log out</AccountLink>
          </Account>
        </TopBar>
        <Header>
          <LogoSlot><SiteLogo /></LogoSlot>
          <Nav>
            {nav.map(([t, ls, on]) => <NavItem key={t} $ls={ls} $active={on}>{t}</NavItem>)}
          </Nav>
          <Dropdown>
            {initiatives.map(([t, ls], i) => <DropItem key={i} $ls={ls}>{t}</DropItem>)}
          </Dropdown>
        </Header>
        <Content>
          <Title>BCSEA WEBINARS</Title>
          <Line $mt={23} $strong $ls={1.43}>The BCSEA Webinar Archive is accessible by BCSEA Members only.</Line>
          <Line $ls={0.62}><LogIn>Log in</LogIn> to access the BCSEA Webinar Archive.</Line>
          <Line $mt={39} $ls={0.55}>BCSEA is dedicated to bringing about a clean energy future for BC, while providing multiple benefits to our members.</Line>
          <JoinButton>Click here to join us in our mission</JoinButton>
          <Sponsors>
            <SponsorSlot $w={145} $mr={195}><SunTracker /></SponsorSlot>
            <SponsorSlot $w={98} $mr={512}><Trapezoid /></SponsorSlot>
            <SponsorSlot $w={145}><GreenLogo /></SponsorSlot>
          </Sponsors>
        </Content>
      </Window>
      <DockHaze />
      <Dock>
        {dock.map(([Art, running, count], i) => (
          <DockItem key={i}>
            <Art />
            {running && <Dot />}
            {count && <Badge>{count}</Badge>}
          </DockItem>
        ))}
        <DockRule />
        <DockItem><Documents /></DockItem>
        <DockItem><Trash /></DockItem>
      </Dock>
    </Desktop>
  );
}
